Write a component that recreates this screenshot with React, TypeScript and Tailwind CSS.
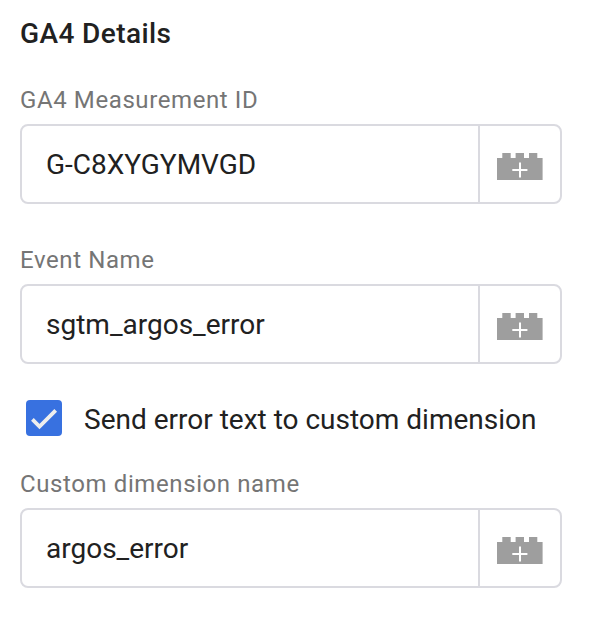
import React from "react";

function BrickIcon() {
  return (
    <svg width="46" height="28" viewBox="0 0 46 28" aria-hidden="true">
      <path d="M0 6H5.300V1H13.700V6H18.600V1H27V6H32V1H40.300V6H45.600V28H0Z" fill="#9e9e9e" />
      <path d="M23 10.500V25.500M15.300 18H30.400" stroke="#fff" strokeWidth="2" />
    </svg>
  );
}

function Field({ label, value, className }: { label: string; value: string; className: string }) {
  return (
    <div className={className}>
      <div className="h-8 whitespace-nowrap text-[24px] leading-8 tracking-[0.6px] text-[#757575]">{label}</div>
      <div className="mt-2 flex h-20 w-[542px] rounded-lg border-2 border-[#dadae0]">
        <div className="flex-1 whitespace-nowrap pl-6 text-[28px] leading-[78px] text-[#212121]">{value}</div>
        <button className="flex w-[82px] items-center justify-center border-l-2 border-[#dadae0] pt-1">
          <BrickIcon />
        </button>
      </div>
    </div>
  );
}

export default function App() {
  return (
    <main className="h-[618px] w-[612px] overflow-hidden bg-white pl-5 pt-4 font-['Roboto',sans-serif]">
      <h1 className="h-9 text-[28px] font-medium leading-9 tracking-[0.4px] text-[#212121]">GA4 Details</h1>
      <Field className="mt-8" label="GA4 Measurement ID" value="G-C8XYGYMVGD" />
      <Field className="mt-10" label="Event Name" value="sgtm_argos_error" />
      <div className="mt-9 flex h-9 items-center pl-1.5">
        <span className="flex h-9 w-9 items-center justify-center rounded bg-[#3871e0]">
          <svg width="36" height="36" viewBox="0 0 36 36" aria-hidden="true">
            <path d="M6.400 19.400L13.500 26.500L29.700 10.300" fill="none" stroke="#eee" strokeWidth="3.800" />
          </svg>
        </span>
        <span className="ml-[22px] whitespace-nowrap pt-1 text-[28px] leading-9 text-[#212121]">Send error text to custom dimension</span>
      </div>
      <Field className="mt-8" label="Custom dimension name" value="argos_error" />
    </main>
  );
}
